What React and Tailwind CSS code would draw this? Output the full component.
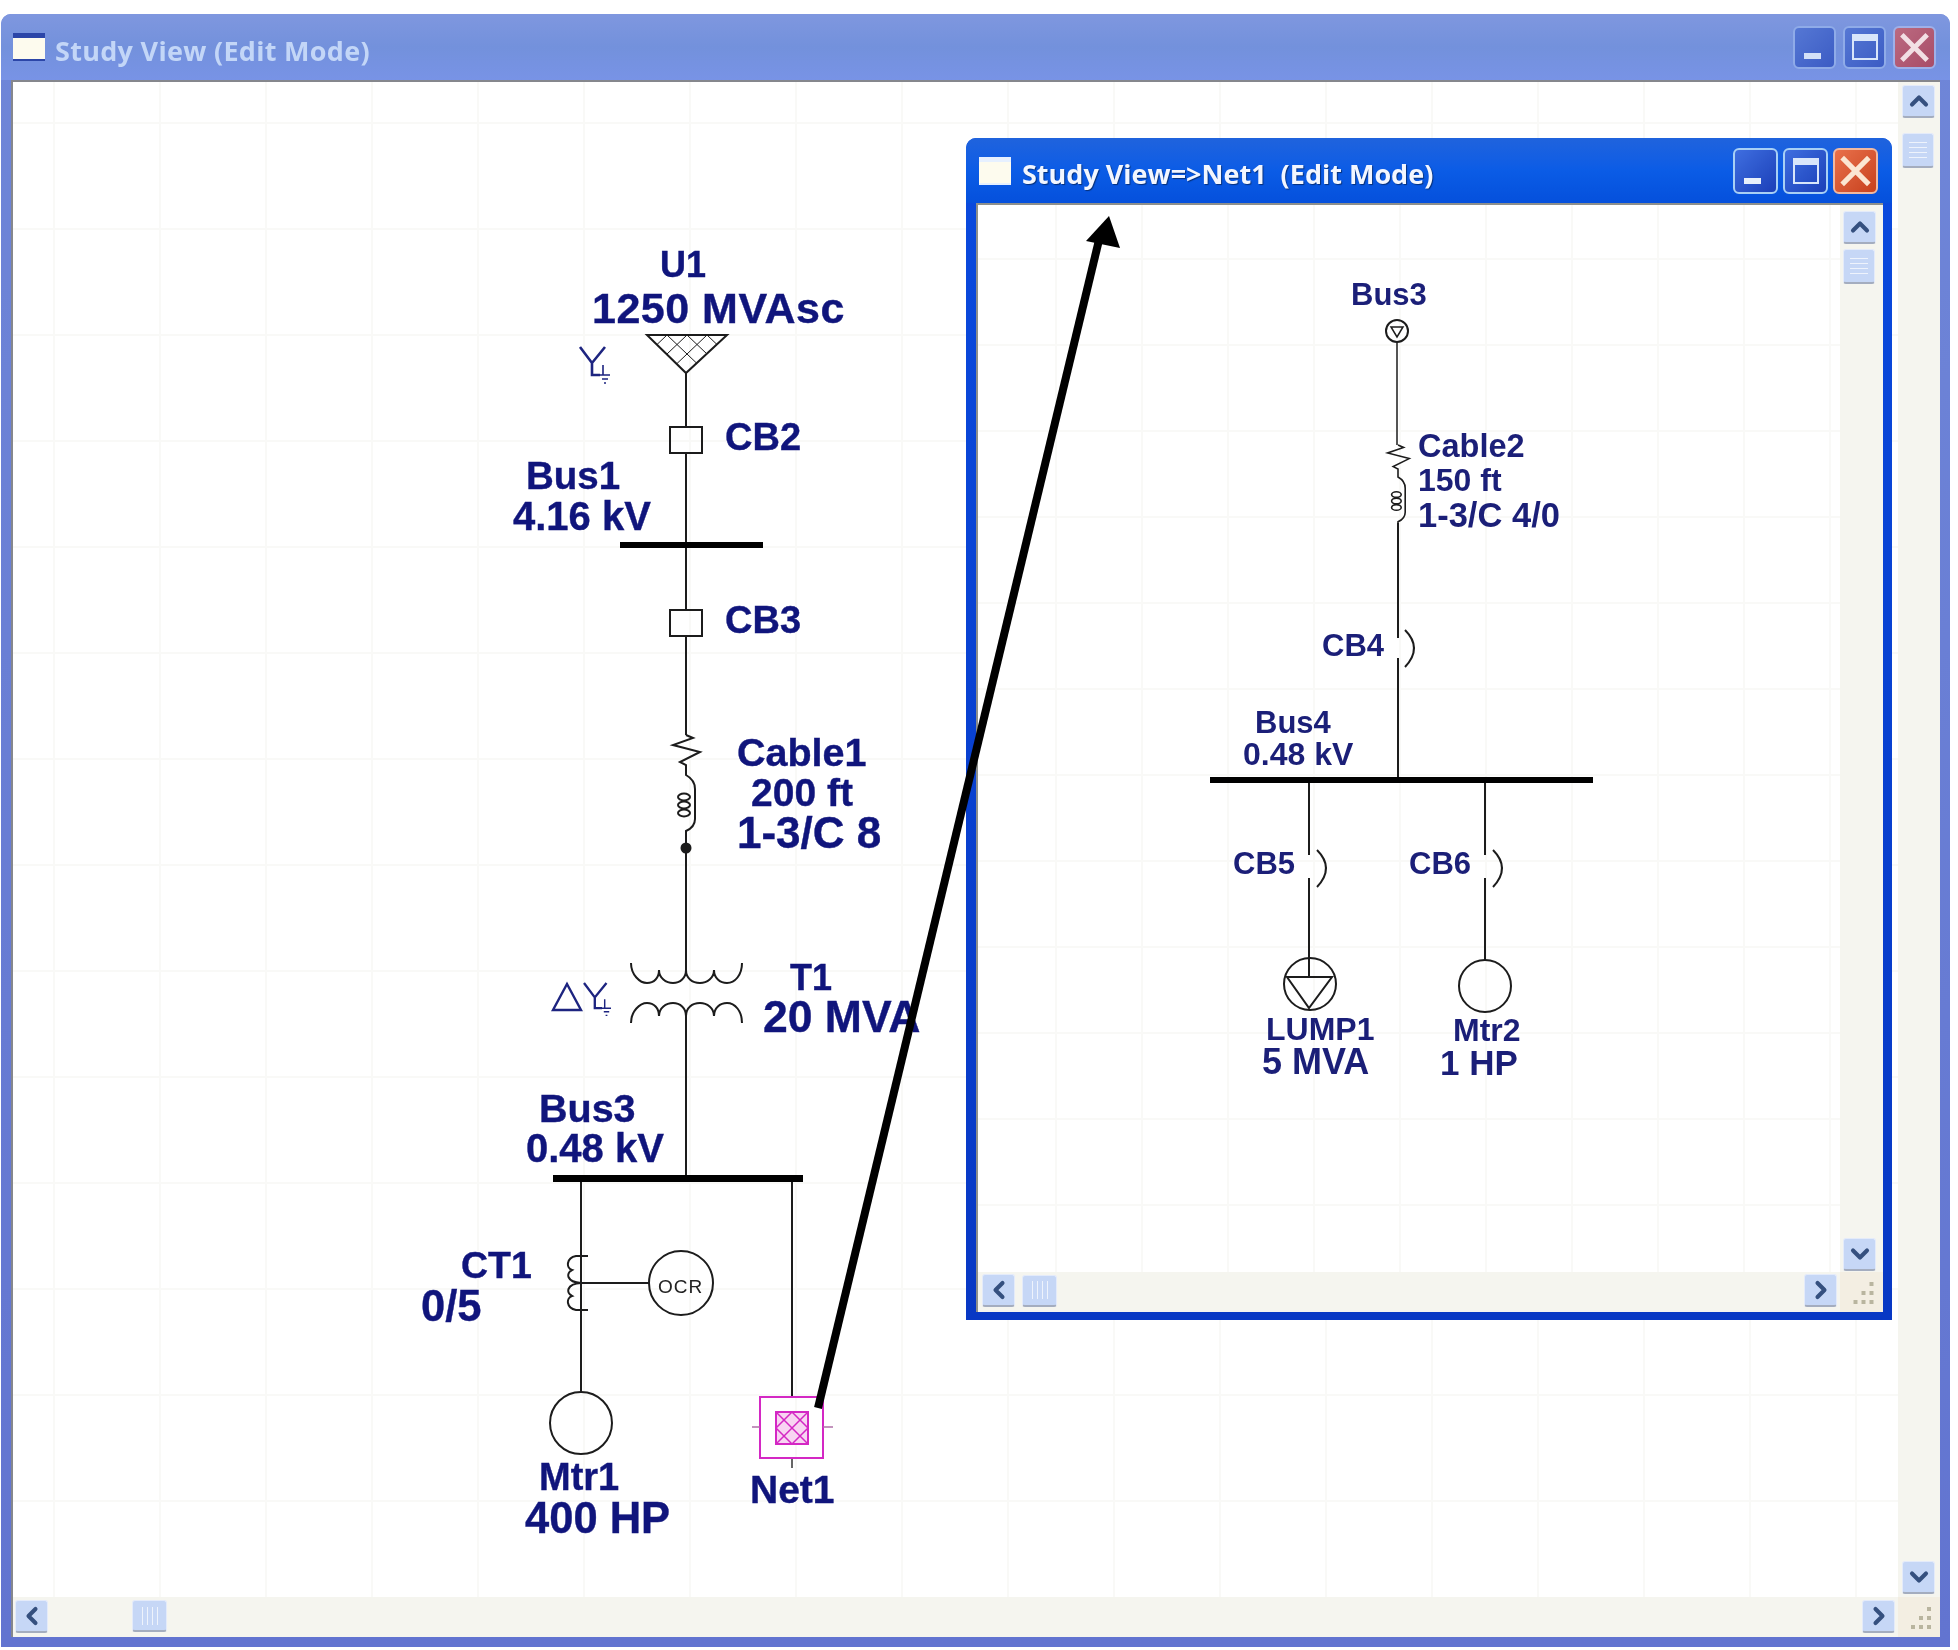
import React from 'react';
import { ChevronUp, ChevronDown, ChevronLeft, ChevronRight } from 'lucide-react';

const WIRE = '#1c1c1c';

// labels are placed in page coordinates, the diagram layers cancel the canvas offset
const Label = ({ className, children }) => (
    <span className={`absolute whitespace-nowrap leading-none font-bold text-[#10157c] [-webkit-text-stroke:0.4px_#10157c] ${className}`}>
        {children}
    </span>
);

const SmallLabel = ({ className, children }) => (
    <span className={`absolute whitespace-nowrap leading-none font-bold text-[#1b1f78] ${className}`}>
        {children}
    </span>
);

const WinButton = ({ kind, active }) => {
    const size = active ? 'w-[45px] h-[46px]' : 'w-[43px] h-[43px]';
    let skin = active
        ? 'bg-gradient-to-br from-[#3f6ee0] to-[#1c3fb8] border-[#a8d0f5]'
        : 'bg-gradient-to-br from-[#5577d4] to-[#3c5cc4] border-[#8fabe8]';
    if (kind === 'close') {
        skin = active
            ? 'bg-gradient-to-br from-[#e8704a] to-[#c8401c] border-[#f0b8a0]'
            : 'bg-gradient-to-br from-[#bb6a80] to-[#a84c68] border-[#9fb0e8]';
    }
    return (
        <div className={`${size} ${skin} border-2 rounded-[6px] flex shrink-0`}>
            {kind === 'min' && (
                <span className={`self-end ml-[9px] mb-[8px] w-[17px] h-[6px] ${active ? 'bg-[#e8f0fb]' : 'bg-[#d3e0f7]'}`} />
            )}
            {kind === 'max' && (
                <span className="m-auto w-[26px] h-[26px] border-2 border-t-[7px] border-[#d9e6fa]" />
            )}
            {kind === 'close' && (
                <svg viewBox="0 0 40 40" className="w-full h-full">
                    <path d="M7 7 L33 33 M33 7 L7 33" stroke={active ? '#fbe6d2' : '#f2dfe4'} strokeWidth="5" />
                </svg>
            )}
        </div>
    );
};

const ScrollButton = ({ icon: Icon, className = '' }) => (
    <div className={`w-[33px] h-[33px] shrink-0 flex items-center justify-center rounded-[3px] bg-[#c6d7f6] border border-[#e4ebfa] border-b-2 border-b-[#a4adbf] ${className}`}>
        <Icon size={28} strokeWidth={3.5} color="#35507f" />
    </div>
);

const VThumb = ({ className = '' }) => (
    <div className={`w-[32px] h-[35px] shrink-0 flex flex-col items-center justify-center gap-[4px] rounded-[3px] bg-[#c6d7f6] border border-[#e4ebfa] border-b-2 border-b-[#a4adbf] ${className}`}>
        <span className="w-[18px] h-px bg-[#eef3fc]" />
        <span className="w-[18px] h-px bg-[#eef3fc]" />
        <span className="w-[18px] h-px bg-[#eef3fc]" />
        <span className="w-[18px] h-px bg-[#eef3fc]" />
    </div>
);

const HThumb = ({ className = '' }) => (
    <div className={`w-[35px] h-[32px] shrink-0 flex items-center justify-center gap-[4px] rounded-[3px] bg-[#c6d7f6] border border-[#e4ebfa] border-b-2 border-b-[#a4adbf] ${className}`}>
        <span className="h-[18px] w-px bg-[#eef3fc]" />
        <span className="h-[18px] w-px bg-[#eef3fc]" />
        <span className="h-[18px] w-px bg-[#eef3fc]" />
        <span className="h-[18px] w-px bg-[#eef3fc]" />
    </div>
);

const Grip = () => (
    <div className="bg-[#f3eee2]">
        <svg viewBox="0 0 40 40" className="w-full h-full">
            <g fill="#b9b59f">
                <rect x="28" y="10" width="4" height="4" />
                <rect x="20" y="19" width="4" height="4" />
                <rect x="28" y="19" width="4" height="4" />
                <rect x="12" y="28" width="4" height="4" />
                <rect x="20" y="28" width="4" height="4" />
                <rect x="28" y="28" width="4" height="4" />
            </g>
        </svg>
    </div>
);

const TitleIcon = ({ active }) => (
    <span className={`w-[32px] h-[28px] shrink-0 bg-[#fdfbee] border-t-[5px] border-b-2 ${active ? 'border-[#e6f0ff]' : 'border-[#2c46a8]'}`} />
);

// zigzag + coil, origin at the top of the zigzag
const CableSymbol = ({ x, y, s = 1 }) => (
    <g transform={`translate(${x} ${y}) scale(${s})`} fill="none" stroke={WIRE} strokeWidth="2">
        <path d="M0 0 L7 3 L-13 10 L14 17 L-6 27 L0 30 L0 40 Q9 45 9 54 V84 Q9 92 0 96 V100" />
        <ellipse cx="-2" cy="62" rx="6" ry="3.5" />
        <ellipse cx="-2" cy="70" rx="6" ry="3.5" />
        <ellipse cx="-2" cy="78" rx="6" ry="3.5" />
    </g>
);

const WyeGround = ({ x, y, s = 1 }) => (
    <g transform={`translate(${x} ${y}) scale(${s})`} fill="none" stroke="#1d2480" strokeWidth="2.6">
        <path d="M0 0 L12 16 L25 0 M12 16 V28 H20" />
        <path d="M23 18 V28 M20 28 H30 M22 32 H28 M24 36 H26" strokeWidth="1.6" />
    </g>
);

const BreakerArc = ({ x, y }) => (
    <path d={`M${x} ${y} Q${x + 18} ${y + 18} ${x} ${y + 37}`} fill="none" stroke={WIRE} strokeWidth="2" />
);

const OuterDiagram = () => (
    <div className="absolute left-[-13px] top-[-82px] w-[1958px] h-[1650px]">
        <svg viewBox="0 0 1958 1650" className="absolute inset-0 w-[1958px] h-[1650px]">
            <g fill="none" stroke={WIRE} strokeWidth="2">
                {/* U1 utility */}
                <path d="M647 335 H727 L686 373 Z" />
                <path strokeWidth="1" d="M667 335 L697 363.5 M687 335 L707 354 M707 335 L717 344.5 M707 335 L677 363.5 M687 335 L667 354 M667 335 L657 344.5" />
                <path d="M686 373 V427 M686 453 V610 M686 636 V735" />
                <rect x="670" y="427" width="32" height="26" />
                <rect x="670" y="610" width="32" height="26" />
                <path d="M686 834 V970" />
                {/* T1 windings */}
                <path d="M631 963 C631 975 640 983 647 983 C654 983 659 978 659 970 C659 978 666 983 673 983 C680 983 686 978 686 970 C686 978 692 983 700 983 C707 983 714 978 714 970 C714 978 720 983 727 983 C735 983 742 975 742 963" />
                <path d="M631 1023 C631 1011 640 1003 647 1003 C654 1003 659 1008 659 1016 C659 1008 666 1003 673 1003 C680 1003 686 1008 686 1016 C686 1008 692 1003 700 1003 C707 1003 714 1008 714 1016 C714 1008 720 1003 727 1003 C735 1003 742 1011 742 1023" />
                <path d="M686 1016 V1176" />
                <path d="M581 1180 V1392 M792 1180 V1397" />
                {/* CT1 */}
                <path d="M588 1256 H576 C566 1258 566 1268 572 1270 C566 1273 566 1282 581 1283 C566 1284 566 1293 572 1296 C566 1298 566 1308 576 1310 H588" />
                <path d="M581 1283 H649" />
                <circle cx="681" cy="1283" r="32" />
                <circle cx="581" cy="1423" r="31" />
                <path d="M792 1458 V1468" stroke="#666" />
            </g>
            <circle cx="686" cy="848" r="5.5" fill={WIRE} />
            <rect x="620" y="542" width="143" height="6" fill="#000" />
            <rect x="553" y="1175" width="250" height="7" fill="#000" />
            <CableSymbol x={686} y={735} />
            <WyeGround x={580} y={347} />
            <WyeGround x={584} y={983} s={0.9} />
            <path d="M567 984 L581 1010 H553 Z" fill="none" stroke="#1d2480" strokeWidth="2.4" />
            {/* Net1 composite network */}
            <g fill="none" stroke="#d428c4">
                <rect x="760" y="1397" width="63" height="61" strokeWidth="2" />
                <rect x="776" y="1412" width="32" height="32" strokeWidth="2" fill="#f8d4f2" />
                <path strokeWidth="1.5" d="M776 1412 L808 1444 M808 1412 L776 1444 M792 1412 L808 1428 L792 1444 L776 1428 Z" />
                <path strokeWidth="1.5" stroke="#b070a8" d="M752 1427 H760 M823 1427 H833" />
            </g>
        </svg>
        <Label className="left-[660px] top-[247px] text-[36px]">U1</Label>
        <Label className="left-[592px] top-[287px] text-[43px] tracking-[0.5px]">1250 MVAsc</Label>
        <Label className="left-[725px] top-[418px] text-[38px]">CB2</Label>
        <Label className="left-[526px] top-[457px] text-[38.5px]">Bus1</Label>
        <Label className="left-[513px] top-[496px] text-[40px]">4.16 kV</Label>
        <Label className="left-[725px] top-[601px] text-[38px]">CB3</Label>
        <Label className="left-[737px] top-[733px] text-[39.5px]">Cable1</Label>
        <Label className="left-[751px] top-[773px] text-[39px]">200 ft</Label>
        <Label className="left-[737px] top-[811px] text-[44px]">1-3/C 8</Label>
        <Label className="left-[790px] top-[960px] text-[36px]">T1</Label>
        <Label className="left-[763px] top-[995px] text-[44.5px]">20 MVA</Label>
        <Label className="left-[539px] top-[1089px] text-[39.5px]">Bus3</Label>
        <Label className="left-[526px] top-[1128px] text-[40px]">0.48 kV</Label>
        <Label className="left-[461px] top-[1247px] text-[37.5px]">CT1</Label>
        <Label className="left-[421px] top-[1285px] text-[43.5px]">0/5</Label>
        <span className="absolute left-[658px] top-[1277px] text-[19px] leading-none tracking-[1px] text-[#222]">OCR</span>
        <Label className="left-[539px] top-[1458px] text-[38px]">Mtr1</Label>
        <Label className="left-[525px] top-[1497px] text-[43.5px]">400 HP</Label>
        <Label className="left-[750px] top-[1470px] text-[39px]">Net1</Label>
    </div>
);

const InnerDiagram = () => (
    <div className="absolute left-[-978px] top-[-205px] w-[1958px] h-[1650px]">
        <svg viewBox="0 0 1958 1650" className="absolute inset-0 w-[1958px] h-[1650px]">
            <g fill="none" stroke={WIRE} strokeWidth="2">
                <circle cx="1397" cy="331" r="11" />
                <path strokeWidth="1.5" d="M1391 327 H1403 L1397 337 Z M1397 342 V445" />
                <path d="M1398 523 V638 M1398 658 V778" />
                <path d="M1309 783 V855 M1309 878 V977" />
                <path d="M1485 783 V855 M1485 878 V960" />
                <circle cx="1310" cy="984" r="26" />
                <path d="M1287 977 H1332 L1309 1008 Z" />
                <circle cx="1485" cy="986" r="26" />
            </g>
            <BreakerArc x={1405} y={630} />
            <BreakerArc x={1317} y={850} />
            <BreakerArc x={1493} y={850} />
            <CableSymbol x={1398} y={445} s={0.8} />
            <rect x="1210" y="777" width="383" height="6" fill="#000" />
        </svg>
        <SmallLabel className="left-[1351px] top-[279px] text-[31px]">Bus3</SmallLabel>
        <SmallLabel className="left-[1418px] top-[430px] text-[32.5px]">Cable2</SmallLabel>
        <SmallLabel className="left-[1418px] top-[464px] text-[32px]">150 ft</SmallLabel>
        <SmallLabel className="left-[1418px] top-[498px] text-[34.5px]">1-3/C 4/0</SmallLabel>
        <SmallLabel className="left-[1322px] top-[630px] text-[31px]">CB4</SmallLabel>
        <SmallLabel className="left-[1255px] top-[707px] text-[31px]">Bus4</SmallLabel>
        <SmallLabel className="left-[1243px] top-[738px] text-[32px]">0.48 kV</SmallLabel>
        <SmallLabel className="left-[1233px] top-[848px] text-[31px]">CB5</SmallLabel>
        <SmallLabel className="left-[1409px] top-[848px] text-[31px]">CB6</SmallLabel>
        <SmallLabel className="left-[1266px] top-[1013px] text-[32px]">LUMP1</SmallLabel>
        <SmallLabel className="left-[1262px] top-[1044px] text-[36px]">5 MVA</SmallLabel>
        <SmallLabel className="left-[1453px] top-[1014px] text-[32px]">Mtr2</SmallLabel>
        <SmallLabel className="left-[1440px] top-[1045px] text-[35px]">1 HP</SmallLabel>
    </div>
);

const NetWindow = () => (
    <div className="absolute left-[953px] top-[56px] w-[926px] h-[1182px] flex flex-col rounded-t-[10px] bg-gradient-to-b from-[#0a4ade] to-[#0838c4]">
        <div className="h-[65px] shrink-0 flex items-center pl-[13px] pr-[14px] rounded-t-[10px] bg-gradient-to-b from-[#1f63dd] via-[#0b5ce6] to-[#0550dc]">
            <TitleIcon active />
            <span className="ml-[11px] pt-[8px] font-['Open_Sans',sans-serif] font-bold text-[27px] text-[#f2f6ff] whitespace-pre [text-shadow:1px_1px_1px_#06307a]">
                Study View=&gt;Net1  (Edit Mode)
            </span>
            <div className="ml-auto flex gap-[5px]">
                <WinButton kind="min" active />
                <WinButton kind="max" active />
                <WinButton kind="close" active />
            </div>
        </div>
        <div className="flex-1 min-h-0 ml-[10px] mr-[9px] mb-[8px] grid grid-cols-[1fr_43px] grid-rows-[1fr_40px] border-t-2 border-l-2 border-[#8d8f8c]">
            <div className="relative overflow-hidden bg-white bg-[linear-gradient(to_right,#f9f9f7_2px,transparent_2px),linear-gradient(#f9f9f7_2px,transparent_2px)] bg-[size:86px_86px] bg-[position:77px_53px]">
                <InnerDiagram />
            </div>
            <div className="bg-[#f5f5ef] flex flex-col items-start pl-[3px] pt-[6px] pb-[1px]">
                <ScrollButton icon={ChevronUp} />
                <VThumb className="mt-[5px]" />
                <ScrollButton icon={ChevronDown} className="mt-auto" />
            </div>
            <div className="bg-[#f5f5ef] flex items-center pl-[4px] pr-[3px] pb-[3px]">
                <ScrollButton icon={ChevronLeft} />
                <HThumb className="ml-[7px]" />
                <ScrollButton icon={ChevronRight} className="ml-auto" />
            </div>
            <Grip />
        </div>
    </div>
);

const App = () => (
    <div className="relative w-[1958px] h-[1650px] bg-white overflow-hidden font-['Liberation_Sans',Arial,sans-serif] blur-[0.5px]">
        <div className="ml-px pt-[14px]">
            <div className="w-[1949px] h-[1633px] flex flex-col rounded-t-[10px] bg-gradient-to-b from-[#6f86d8] to-[#6274d0]">
                <div className="h-[66px] shrink-0 flex items-center pl-[12px] pr-[14px] rounded-t-[10px] bg-gradient-to-b from-[#7f97df] via-[#7391dc] to-[#7893e6]">
                    <TitleIcon />
                    <span className="ml-[10px] pt-[8px] font-['Open_Sans',sans-serif] font-bold text-[27px] tracking-[0.3px] text-[#c3d6f7]">
                        Study View (Edit Mode)
                    </span>
                    <div className="ml-auto flex gap-[7px]">
                        <WinButton kind="min" />
                        <WinButton kind="max" />
                        <WinButton kind="close" />
                    </div>
                </div>
                <div className="flex-1 min-h-0 ml-[10px] mr-[10px] mb-[10px] grid grid-cols-[1fr_42px] grid-rows-[1fr_40px] border-t-2 border-l-2 border-[#85878d]">
                    <div className="relative overflow-hidden bg-white bg-[linear-gradient(to_right,#f9f9f7_2px,transparent_2px),linear-gradient(#f9f9f7_2px,transparent_2px)] bg-[size:106px_106px] bg-[position:40px_40px]">
                        <OuterDiagram />
                        <NetWindow />
                    </div>
                    <div className="bg-[#f5f5ef] flex flex-col items-start pl-[4px] pt-[3px] pb-[3px]">
                        <ScrollButton icon={ChevronUp} />
                        <VThumb className="mt-[15px]" />
                        <ScrollButton icon={ChevronDown} className="mt-auto" />
                    </div>
                    <div className="bg-[#f5f5ef] flex items-center pl-[2px] pr-[3px] pb-[2px]">
                        <ScrollButton icon={ChevronLeft} />
                        <HThumb className="ml-[84px]" />
                        <ScrollButton icon={ChevronRight} className="ml-auto" />
                    </div>
                    <Grip />
                </div>
            </div>
        </div>
        {/* link arrow sits over both windows */}
        <svg viewBox="0 0 1958 1650" className="absolute inset-0 w-[1958px] h-[1650px] pointer-events-none">
            <path d="M818 1408 L1099 240" stroke="#000" strokeWidth="8" fill="none" />
            <path d="M1109 216 L1120 248 L1086 241 Z" fill="#000" />
        </svg>
    </div>
);

export default App;
